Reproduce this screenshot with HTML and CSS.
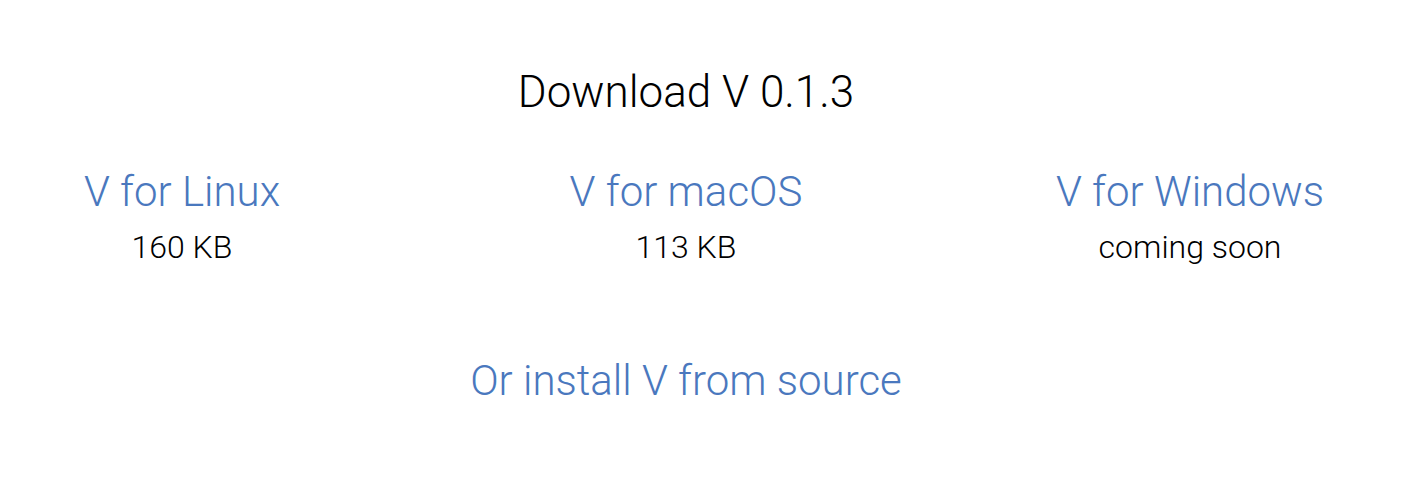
FILE: index.html
```html
<!DOCTYPE html>
<html lang="en">
<head>
    <meta charset="UTF-8">
    <meta name="viewport" content="width=device-width, initial-scale=1.0">
    <title>Download V</title>
    <link rel="stylesheet" href="styles.css">
</head>
<body>

    <div class="page">
        <h1>Download V 0.1.3</h1>

        <div class="downloads">
            <div class="platform">
                <a href="#">V for Linux</a>
                <div class="size">160 KB</div>
            </div>
            <div class="platform">
                <a href="#">V for macOS</a>
                <div class="size">113 KB</div>
            </div>
            <div class="platform">
                <a href="#">V for Windows</a>
                <div class="size">coming soon</div>
            </div>
        </div>

        <a class="source" href="#">Or install V from source</a>
    </div>

</body>
</html>
```

FILE: styles.css
```css
body {
    margin: 0;
    font-family: Roboto, "Liberation Sans", sans-serif;
    font-weight: 300;
    background-color: #fff;
    color: #000;
}
a {
    color: #4a78be;
    text-decoration: none;
}
.page {
    width: 1372px;
    text-align: center;
    padding-top: 64px;
}
h1 {
    margin: 0;
    font-size: 44px;
    font-weight: 300;
    line-height: 56px;
}
.downloads {
    display: grid;
    grid-template-columns: repeat(3, 300px);
    column-gap: 204px;
    justify-content: center;
    margin-top: 45px;
}
.platform a {
    display: block;
    font-size: 42px;
    line-height: 54px;
}
.size {
    font-size: 32px;
    line-height: 40px;
    margin-top: 8px;
}
.source {
    display: inline-block;
    margin-top: 87px;
    font-size: 42px;
    line-height: 54px;
}
```
